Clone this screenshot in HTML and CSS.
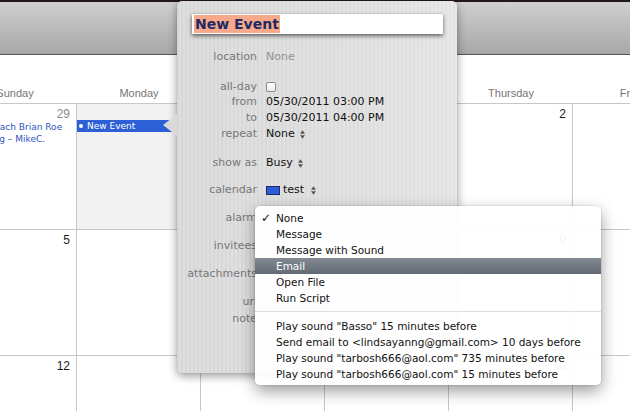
FILE: index.html
```html
<!DOCTYPE html>
<html>
<head>
<meta charset="utf-8">
<link rel="stylesheet" href="styles.css">
</head>
<body>
<div class="window">
  <div class="toolbar"></div>
  <div class="calendar">
    <div class="dayheads">
      <div class="dayname">Sunday</div>
      <div class="dayname">Monday</div>
      <div class="dayname">Tuesday</div>
      <div class="dayname">Wednesday</div>
      <div class="dayname">Thursday</div>
      <div class="dayname">Friday</div>
      <div class="dayname"></div>
    </div>
    <div class="week">
      <div class="cell">
        <div class="num other">29</div>
        <div class="evtext first">Coach Brian Roe</div>
        <div class="evtext">Mtg – MikeC.</div>
      </div>
      <div class="cell today">
        <div class="num"></div>
        <div class="evbar"><span class="dot"></span>New Event</div>
      </div>
      <div class="cell"></div>
      <div class="cell"></div>
      <div class="cell"><div class="num">2</div></div>
      <div class="cell"></div>
      <div class="cell"></div>
    </div>
    <div class="week">
      <div class="cell"><div class="num">5</div></div>
      <div class="cell"></div>
      <div class="cell"></div>
      <div class="cell"></div>
      <div class="cell"><div class="num">9</div></div>
      <div class="cell"></div>
      <div class="cell"></div>
    </div>
    <div class="week">
      <div class="cell"><div class="num">12</div></div>
      <div class="cell"></div>
      <div class="cell"></div>
      <div class="cell"></div>
      <div class="cell"><div class="num">16</div></div>
      <div class="cell"></div>
      <div class="cell"></div>
    </div>
  </div>

  <div class="popover">
    <div class="titlefield"><span class="sel">New Event</span></div>
    <div class="row r-location"><div class="lbl">location</div><div class="val placeholder">None</div></div>
    <div class="row r-allday"><div class="lbl">all-day</div><div class="val"><span class="checkbox"></span></div></div>
    <div class="row"><div class="lbl">from</div><div class="val">05/30/2011 03:00 PM</div></div>
    <div class="row"><div class="lbl">to</div><div class="val">05/30/2011 04:00 PM</div></div>
    <div class="row"><div class="lbl">repeat</div><div class="val">None<svg class="stepper" width="5" height="9" viewBox="0 0 5 9"><path d="M0 3.8 L2.5 0.3 L5 3.8 Z M0 5.2 L2.5 8.7 L5 5.2 Z"/></svg></div></div>
    <div class="row r-showas"><div class="lbl">show as</div><div class="val">Busy<svg class="stepper" width="5" height="9" viewBox="0 0 5 9"><path d="M0 3.8 L2.5 0.3 L5 3.8 Z M0 5.2 L2.5 8.7 L5 5.2 Z"/></svg></div></div>
    <div class="row r-gap11"><div class="lbl">calendar</div><div class="val"><span class="swatch"></span>test<svg class="stepper wide" width="5" height="9" viewBox="0 0 5 9"><path d="M0 3.8 L2.5 0.3 L5 3.8 Z M0 5.2 L2.5 8.7 L5 5.2 Z"/></svg></div></div>
    <div class="row r-gap12"><div class="lbl">alarm</div><div class="val"></div></div>
    <div class="row r-gap12"><div class="lbl">invitees</div><div class="val"></div></div>
    <div class="row r-gap12"><div class="lbl">attachments</div><div class="val"></div></div>
    <div class="row r-gap12"><div class="lbl">url</div><div class="val"></div></div>
    <div class="row r-note"><div class="lbl">note</div><div class="val"></div></div>
  </div>

  <div class="menu">
    <div class="item"><span class="check">✓</span>None</div>
    <div class="item">Message</div>
    <div class="item">Message with Sound</div>
    <div class="item hl">Email</div>
    <div class="item">Open File</div>
    <div class="item">Run Script</div>
    <div class="sep"></div>
    <div class="item">Play sound "Basso" 15 minutes before</div>
    <div class="item">Send email to &lt;lindsayanng@gmail.com&gt; 10 days before</div>
    <div class="item">Play sound "tarbosh666@aol.com" 735 minutes before</div>
    <div class="item">Play sound "tarbosh666@aol.com" 15 minutes before</div>
  </div>
</div>
</body>
</html>
```

FILE: styles.css
```css
html, body {
  margin: 0;
  padding: 0;
  background: #fff;
  font-family: "DejaVu Sans", "Liberation Sans", sans-serif;
}

.window {
  position: relative;
  width: 630px;
  height: 411px;
  overflow: hidden;
  background: #fff;
}

.toolbar {
  height: 52px;
  border-top: 2px solid #22161f;
  border-bottom: 1px solid #575757;
  background: linear-gradient(#cfcfcf, #a7a7a7);
}

.calendar {
  width: 868px;
  margin-left: -47px;
  font-family: "Liberation Sans", Arial, sans-serif;
}

.dayheads {
  display: grid;
  grid-template-columns: repeat(7, 124px);
  height: 48px;
  border-bottom: 1px solid #c7c7c7;
}

.dayname {
  display: flex;
  align-items: flex-end;
  justify-content: center;
  font-size: 11px;
  line-height: 13px;
  padding-bottom: 3px;
  box-sizing: border-box;
  color: #767676;
  white-space: nowrap;
}

.week {
  display: grid;
  grid-template-columns: repeat(7, 124px);
  height: 125px;
  border-bottom: 1px solid #c7c7c7;
}

.cell {
  border-right: 1px solid #c7c7c7;
  overflow: hidden;
}

.cell.today {
  background: #f2f2f2;
}

.num {
  height: 12px;
  margin-top: 4px;
  padding-right: 6px;
  text-align: right;
  font-size: 12px;
  line-height: 12px;
  color: #1a1a1a;
}

.num.other {
  color: #8a8a8a;
}

.evtext {
  padding-left: 35px;
  font-family: "DejaVu Sans", sans-serif;
  font-size: 9px;
  line-height: 12px;
  color: #2f55c0;
  white-space: nowrap;
}

.evtext.first {
  margin-top: 1px;
}

.evbar {
  display: flex;
  align-items: center;
  height: 12px;
  background: #2d5fd6;
  color: #fff;
  font-family: "DejaVu Sans", sans-serif;
  font-size: 9px;
  line-height: 12px;
  white-space: nowrap;
}

.dot {
  width: 4px;
  height: 4px;
  border-radius: 50%;
  background: #fff;
  margin: 0 4px 0 2px;
}

/* popover */
.popover {
  position: absolute;
  left: 177px;
  top: 1px;
  width: 280px;
  height: 372px;
  box-sizing: border-box;
  padding: 13px 15px 0 15px;
  border-radius: 5px;
  background:
    repeating-linear-gradient(90deg, rgba(255,255,255,0) 0 2px, rgba(255,255,255,0.2) 2px 4px),
    linear-gradient(90deg, #d6d6d6, #dcdcdc 60%, #e2e2e2);
  box-shadow: 0 3px 10px rgba(0,0,0,0.4), 0 0 1px rgba(0,0,0,0.3);
  font-size: 11px;
}

.popover::before {
  content: "";
  position: absolute;
  left: -14px;
  top: 113px;
  border-style: solid;
  border-width: 11px 14px 11px 0;
  border-color: transparent #d9d9d9 transparent transparent;
}

.titlefield {
  width: 251px;
  height: 20px;
  box-sizing: border-box;
  padding: 1px 0 0 2px;
  background: #fff;
  box-shadow: 0 2px 4px rgba(0,0,0,0.55), 0 0 1px rgba(0,0,0,0.3);
}

.sel {
  display: inline-block;
  padding: 0 1px;
  background: #f8a98b;
  color: #1c2b63;
  font-weight: bold;
  font-size: 14px;
  line-height: 18px;
}

.row {
  display: flex;
  height: 16px;
  line-height: 16px;
  white-space: nowrap;
}

.lbl {
  flex: none;
  width: 65px;
  margin-right: 9px;
  display: flex;
  justify-content: flex-end;
  color: #777;
}

.val {
  display: flex;
  align-items: center;
  color: #111;
}

.val.placeholder {
  color: #929292;
}

.r-location { margin-top: 15px; }
.r-allday { margin-top: 15px; height: 14px; line-height: 14px; }
.r-showas { margin-top: 13px; }
.r-gap11 { margin-top: 11px; }
.r-gap12 { margin-top: 12px; }
.r-note { margin-top: 1px; }

.checkbox {
  display: inline-block;
  width: 8px;
  height: 8px;
  border: 1px solid #8c8c8c;
  border-radius: 2px;
  background: linear-gradient(#ffffff, #ececec);
}

.stepper {
  margin-left: 5px;
  fill: #555;
}

.stepper.wide {
  margin-left: 7px;
}

.swatch {
  width: 12px;
  height: 7px;
  border: 1px solid #1b2c6b;
  background: #2c5cd8;
  margin-right: 3px;
}

/* menu */
.menu {
  position: absolute;
  left: 255px;
  top: 206px;
  width: 346px;
  height: 179px;
  box-sizing: border-box;
  padding: 4px 0 3px;
  border-radius: 5px;
  background: rgba(255,255,255,0.95);
  box-shadow: 0 6px 16px rgba(0,0,0,0.4), 0 0 0 1px rgba(0,0,0,0.06);
  font-size: 10.5px;
  color: #111;
}

.item {
  position: relative;
  height: 16px;
  line-height: 16px;
  padding-left: 21px;
  white-space: nowrap;
}

.check {
  position: absolute;
  left: 6px;
  top: 0;
  font-size: 12px;
}

.item.hl {
  background: linear-gradient(#838a94, #626973);
  color: #fff;
}

.sep {
  height: 1px;
  margin: 5px 0 6px;
  background: #dcdcdc;
}
```
